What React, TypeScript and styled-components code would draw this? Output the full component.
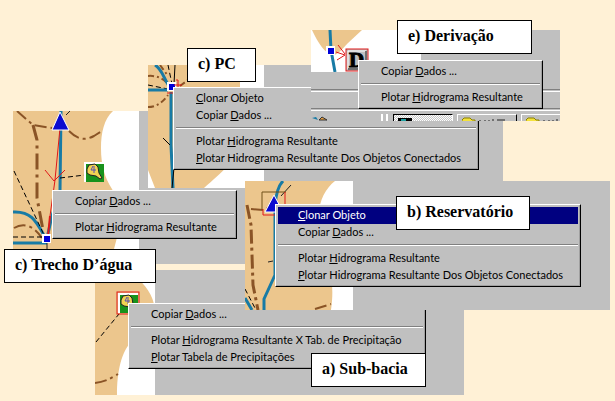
import React from "react";
import styled, { createGlobalStyle } from "styled-components";

const GlobalStyle = createGlobalStyle`
  * { box-sizing: border-box; }
  body { margin: 0; background: #fff1d6; }
`;

const Desktop = styled.main`
  position: relative;
  min-height: 100vh;
  overflow: hidden;
  background: #fff1d6;
  font-family: Lato, "Liberation Sans", sans-serif;
`;

type Place = { $x: number; $y: number };

const Window = styled.section<Place & { $w: number; $h: number }>`
  position: absolute;
  left: ${(p) => p.$x}px;
  top: ${(p) => p.$y}px;
  width: ${(p) => p.$w}px;
  height: ${(p) => p.$h}px;
  overflow: hidden;
  background: #c0c0c0;
`;

const MapArea = styled.svg`
  display: block;
`;

const MenuBox = styled.div<Place & { $w: number }>`
  position: absolute;
  left: ${(p) => p.$x}px;
  top: ${(p) => p.$y}px;
  width: ${(p) => p.$w}px;
  display: flex;
  flex-direction: column;
  padding: 2px;
  background: #c0c0c0;
  border: 1px solid;
  border-color: #fff #000 #000 #fff;
  box-shadow: inset -1px -1px #a0a0a0;
`;

const MenuItem = styled.button<{ $active?: boolean }>`
  height: 17px;
  padding: 0 0 2px 20px;
  border: 0;
  text-align: left;
  white-space: nowrap;
  font: 11px/15px Lato, "Liberation Sans", sans-serif;
  color: ${(p) => (p.$active ? "#fff" : "#000")};
  background: ${(p) => (p.$active ? "#000080" : "transparent")};

  u {
    text-decoration-thickness: 1px;
    text-underline-offset: 1px;
    text-decoration-skip-ink: none;
  }
`;

const Separator = styled.hr`
  width: 100%;
  height: 2px;
  margin: 3px 0 4px;
  border: 0;
  border-top: 1px solid #808080;
  border-bottom: 1px solid #fff;
`;

const Caption = styled.h2<Place & { $w: number }>`
  position: absolute;
  left: ${(p) => p.$x}px;
  top: ${(p) => p.$y}px;
  width: ${(p) => p.$w}px;
  margin: 0;
  padding: 5px 0 7px 10px;
  border: 1px solid #000;
  background: #fff;
  white-space: nowrap;
  font: bold 16px/20px "Liberation Serif", "Times New Roman", serif;
  color: #000;
`;

const Toolbars = styled.div`
  display: flex;
  flex-direction: column;
  padding-top: 17px;
`;

const Groove = styled.div`
  height: 3px;
  margin-bottom: 16px;
  border-top: 1px solid #808080;
  border-bottom: 1px solid #fff;
`;

const TaskRow = styled.div`
  display: flex;
  gap: 4px;
  margin-top: -13px;
`;

const Tray = styled.div`
  flex: 0 0 78px;
  display: flex;
  justify-content: space-between;
`;

const Grip = styled.span`
  width: 7px;
  height: 22px;
  margin-right: 1px;
  border: solid #fff;
  border-width: 0 2px;
`;

const TaskButton = styled.button<{ $pressed?: boolean }>`
  flex: 0 0 60px;
  height: 22px;
  padding: 2px 4px;
  display: flex;
  border: 1px solid;
  border-color: ${(p) => (p.$pressed ? "#000 #fff #fff #000" : "#fff #000 #000 #fff")};
  background: ${(p) =>
    p.$pressed ? "repeating-conic-gradient(#fff 0 25%, #c8c8c8 0 50%) 0 0 / 2px 2px" : "#c0c0c0"};
`;

type Entry = { key: string; before?: string; after: string; active?: boolean } | null;

const copy: Entry = { before: "Copiar ", key: "D", after: "ados ..." };
const clone: Entry = { key: "C", after: "lonar Objeto" };
const plot: Entry = { before: "Plotar ", key: "H", after: "idrograma Resultante" };
const plotAll: Entry = { key: "P", after: "lotar Hidrograma Resultante Dos Objetos Conectados" };

function Menu({ x, y, w, entries, label }: { x: number; y: number; w: number; entries: Entry[]; label: string }) {
  return (
    <MenuBox $x={x} $y={y} $w={w} role="menu" aria-label={label}>
      {entries.map((e, i) =>
        e ? (
          <MenuItem key={i} role="menuitem" type="button" $active={e.active}>
            {e.before}
            <u>{e.key}</u>
            {e.after}
          </MenuItem>
        ) : (
          <Separator key={i} />
        )
      )}
    </MenuBox>
  );
}

const TAN = "#ecc68d";
const river = { fill: "none", stroke: "#187ba5", strokeWidth: 3 };
const divide = { fill: "none", stroke: "#8a5426", strokeWidth: 3, strokeDasharray: "12 4 3 4" };
const link = { fill: "none", stroke: "#000", strokeWidth: 1, strokeDasharray: "5 3" };
const red = { fill: "none", stroke: "#e01818", strokeWidth: 1 };

function Node({ x, y }: { x: number; y: number }) {
  return (
    <g>
      <rect x={x - 1} y={y - 1} width={9} height={9} fill="#fff" />
      <rect x={x + 1} y={y + 1} width={6} height={6} fill="#0000d8" />
    </g>
  );
}

function BasinIcon({ x, y }: { x: number; y: number }) {
  return (
    <g transform={`translate(${x} ${y})`}>
      <rect width={20} height={20} fill="#fff" />
      <rect x={2} y={2} width={18} height={18} fill="#18921c" />
      <path d="M3 7 L5 3 L11 2 L14 5 L15 11 L18 16 L16 17 L12 14 L6 13 L3 11 Z" fill="#f2d352" stroke="#222" />
      <path d="M9 4 L7 8 H12 M10 4 V11" fill="none" stroke="#5a50b0" />
    </g>
  );
}

function ReachMap() {
  return (
    <MapArea width={126} height={153} viewBox="13 111 126 153" aria-hidden="true">
      <rect x={13} y={111} width={126} height={153} fill="#fff" />
      <path d="M13 111 H113 C104 119 101 133 101 148 C101 166 105 178 112 189 C122 205 121 225 114 249 L112 264 H13 Z" fill={TAN} />
      <path d="M17 111 L33 125 L52 128" {...divide} strokeWidth={2} />
      <path d="M33 125 L37 140 V198 L43 230" {...divide} strokeDasharray="16 5 3 5" />
      <path d="M69 131 C79 141 86 140 94 136 L102 131" {...divide} strokeWidth={2} />
      <path d="M14 228 C24 222 34 226 42 238" {...divide} strokeWidth={2} />
      <path d="M61 111 L60 190 L52 216 L47 238" {...river} />
      <path d="M13 212 C31 211 36 221 45 237 M13 243 H47" {...river} />
      <path d="M14 171 L44 235 M13 237 H43 M60 178 L85 175" {...link} />
      <path d="M66 115 L70 111 M47 243 V264" stroke="#222" />
      <path d="M60 128 L55 180 L50 216 M45 170 L54 181 L65 170" {...red} />
      <path d="M50 216 L48 236" {...red} strokeWidth={2} />
      <path d="M60 112 L69 130 H52 Z" fill="#0b0bd0" stroke="#fff" />
      <Node x={43} y={235} />
      <BasinIcon x={84} y={162} />
    </MapArea>
  );
}

function PointMap() {
  return (
    <MapArea width={116} height={123} viewBox="148 65 116 123" aria-hidden="true">
      <rect x={148} y={65} width={116} height={123} fill="#fff" />
      <path d="M148 65 H240 V140 C238 160 222 172 204 188 H155 L148 170 Z" fill={TAN} />
      <path d="M148 76 C158 75 166 80 171 88 M160 65 L168 76 M148 107 C157 107 163 102 168 95 M180 86 L188 80" {...divide} strokeWidth={2} strokeDasharray="6 3 2 3" />
      <path d="M148 85 L168 89 M168 65 L172 84" {...link} />
      <path d="M155 65 C162 69 164 79 169 86 M148 90 H168 M171 92 V145 L173 188" {...river} />
      <path d="M175 65 L174 84 M163 138 L170 145 M174 168 L172 188" fill="none" stroke="#000" />
      <Node x={168} y={83} />
      <path d="M167 93 L174 93 M176 80 H178 V90 M174 85 H182" {...red} />
    </MapArea>
  );
}

function DiversionMap() {
  return (
    <MapArea width={110} height={42} viewBox="311 30 110 42" aria-hidden="true">
      <rect x={311} y={30} width={110} height={42} fill="#fff" />
      <path d="M312 30 H362 L348 43 C342 49 338 55 333 55 C325 54 318 43 312 30 Z" fill={TAN} />
      <path d="M330 30 L331 50 L335 72" {...river} />
      <Node x={327} y={47} />
      <path d="M336 52 L345 55 M338 45 L345 54 M337 60 L345 55" {...red} />
      <rect x={346} y={49} width={22} height={22} fill="#c0c0c0" stroke="#e01818" />
      <path d="M348 69 V51 H366" fill="none" stroke="#fff" />
      <path d="M366 51 V69 H348" fill="none" stroke="#707070" strokeWidth={2} />
      <text x={349} y={67} fontFamily="Liberation Serif, serif" fontSize={21} fontWeight="bold" stroke="#000">D</text>
    </MapArea>
  );
}

function ReservoirMap() {
  return (
    <MapArea width={108} height={129} viewBox="245 181 108 129" aria-hidden="true">
      <rect x={245} y={181} width={108} height={129} fill="#fff" />
      <path d="M245 181 H335 C326 188 319 200 319 215 C321 246 337 270 331 310 H245 Z" fill={TAN} />
      <path d="M247 205 L251 225 L253 285 L258 310" {...divide} strokeDasharray="14 4 3 4" />
      <path d="M251 209 L263 210 L273 206 M315 309 L331 304" {...divide} strokeWidth={2} />
      <path d="M283 181 C278 186 276 194 275 205 V275 L264 299 V310 M245 298 L252 310" {...river} />
      <path d="M245 289 L255 308" {...link} />
      <path d="M281 196 L291 185 M268 262 L273 261" stroke="#222" />
      <path d="M262 192 H286 M262 192 V210" fill="none" stroke="#705018" />
      <path d="M285 192 V215 H263 V209" {...red} />
      <path d="M274 195 L283 212 H265 Z" fill="#0b0bd0" stroke="#fff" />
    </MapArea>
  );
}

function BasinMap() {
  return (
    <MapArea width={60} height={125} viewBox="95 270 60 125" aria-hidden="true">
      <rect x={95} y={270} width={60} height={125} fill="#fff" />
      <path d="M95 270 H128 C142 281 151 291 154 304 V340 H133 C121 351 117 372 117 395 H95 Z" fill={TAN} />
      <path d="M95 383 C104 382 110 379 118 374" {...divide} strokeWidth={2} />
      <path d="M96 342 L119 314" {...link} />
      <BasinIcon x={118} y={293} />
      <rect x={117} y={292} width={22} height={22} {...red} />
    </MapArea>
  );
}

function TrayIcon() {
  return (
    <svg width={18} height={8} aria-hidden="true">
      <path d="M1 4 L5 3 L7 6 Z" fill="#187ba5" />
      <path d="M8 6 L11 3 L16 6 Z" fill="#e8a040" stroke="#333" />
    </svg>
  );
}

function AppIcon() {
  return (
    <svg width={16} height={6} aria-hidden="true">
      <rect y={1} width={14} height={5} fill="#000" />
      <path d="M3 3 H8" stroke="#20a0a0" strokeWidth={2} />
    </svg>
  );
}

function FolderIcon() {
  return (
    <svg width={46} height={6} aria-hidden="true">
      <path d="M0 6 V3 L2 1 H8 L10 3 H13 V6 Z" fill="#f4e23c" stroke="#8a8000" />
      <path d="M18 3 V6 M23 3 V6 M27 3 V6 M31 2 V6 M35 3 H43" stroke="#222" />
    </svg>
  );
}

export default function App() {
  return (
    <>
      <GlobalStyle />
      <Desktop>
        <Window $x={95} $y={270} $w={369} $h={125}>
          <BasinMap />
          <Menu
            x={33}
            y={33}
            w={298}
            label="Sub-bacia"
            entries={[
              copy,
              null,
              { before: "Plotar ", key: "H", after: "idrograma Resultante X Tab. de Precipitação" },
              { key: "P", after: "lotar Tabela de Precipitações" },
            ]}
          />
        </Window>
        <Window $x={13} $y={111} $w={240} $h={153}>
          <ReachMap />
        </Window>
        <Window $x={148} $y={65} $w={355} $h={123}>
          <PointMap />
          <Menu x={25} y={22} w={306} label="PC" entries={[clone, copy, null, plot, plotAll]} />
        </Window>
        <Menu x={52} y={190} w={185} label="Trecho D'água" entries={[copy, null, plot]} />
        <Window $x={245} $y={181} $w={365} $h={129}>
          <ReservoirMap />
          <Menu
            x={30}
            y={23}
            w={306}
            label="Reservatório"
            entries={[{ ...clone, active: true }, copy, null, plot, plotAll]}
          />
        </Window>
        <Window $x={311} $y={30} $w={249} $h={91}>
          <DiversionMap />
          <Toolbars>
            <Groove />
            <Groove />
            <TaskRow>
              <Tray>
                <TrayIcon />
                <Grip />
              </Tray>
              <TaskButton $pressed type="button" aria-label="Projeto">
                <AppIcon />
              </TaskButton>
              <TaskButton type="button" aria-label="Pasta">
                <FolderIcon />
              </TaskButton>
              <TaskButton type="button" aria-label="Pasta">
                <FolderIcon />
              </TaskButton>
            </TaskRow>
          </Toolbars>
          <Menu x={47} y={30} w={185} label="Derivação" entries={[copy, null, plot]} />
        </Window>
        <Caption $x={397} $y={20} $w={135}>e) Derivação</Caption>
        <Caption $x={187} $y={48} $w={69}>c) PC</Caption>
        <Caption $x={396} $y={196} $w={134}>b) Reservatório</Caption>
        <Caption $x={4} $y={249} $w={152}>c) Trecho D’água</Caption>
        <Caption $x={311} $y={353} $w={115}>a) Sub-bacia</Caption>
      </Desktop>
    </>
  );
}
